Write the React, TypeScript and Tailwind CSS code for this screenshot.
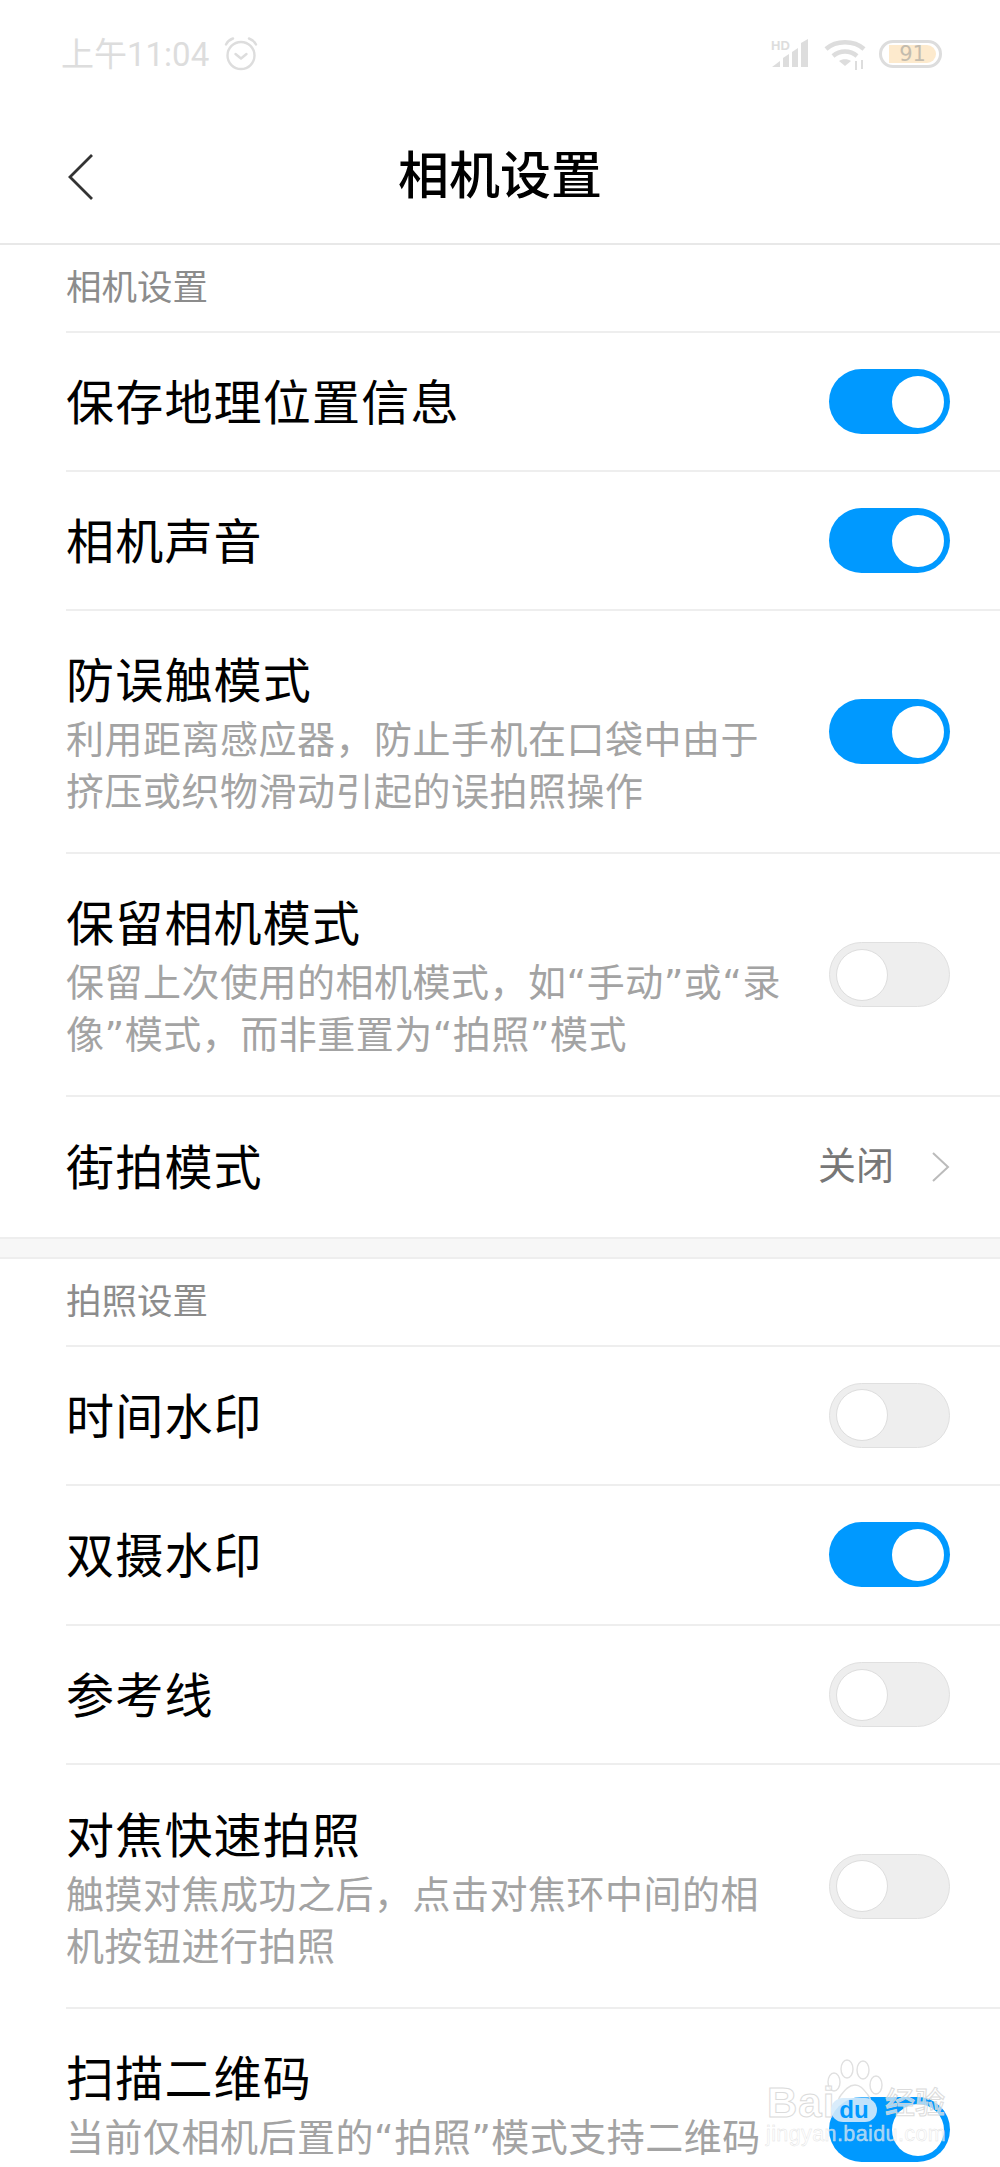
type Item = {
  title: string;
  desc?: string[];
  on?: boolean;
  value?: string;
};

const cameraItems: Item[] = [
  { title: "保存地理位置信息", on: true },
  { title: "相机声音", on: true },
  {
    title: "防误触模式",
    desc: ["利用距离感应器，防止手机在口袋中由于", "挤压或织物滑动引起的误拍照操作"],
    on: true,
  },
  {
    title: "保留相机模式",
    desc: ["保留上次使用的相机模式，如“手动”或“录", "像”模式，而非重置为“拍照”模式"],
    on: false,
  },
  { title: "街拍模式", value: "关闭" },
];

const photoItems: Item[] = [
  { title: "时间水印", on: false },
  { title: "双摄水印", on: true },
  { title: "参考线", on: false },
  {
    title: "对焦快速拍照",
    desc: ["触摸对焦成功之后，点击对焦环中间的相", "机按钮进行拍照"],
    on: false,
  },
  {
    title: "扫描二维码",
    // second line falls below the fold, keep the row height with an empty line
    desc: ["当前仅相机后置的“拍照”模式支持二维码", "\u00a0"],
    on: true,
  },
];

const Toggle = ({ on }: { on?: boolean }) =>
  on ? (
    <div className="flex h-[65px] w-[121px] shrink-0 items-center justify-end rounded-full bg-[#0099ff] pr-[6px]">
      <div className="h-[52px] w-[52px] rounded-full bg-white" />
    </div>
  ) : (
    <div className="flex h-[65px] w-[121px] shrink-0 items-center rounded-full border border-[#e0e0e0] bg-[#eeeeee] pl-[6px]">
      <div className="h-[52px] w-[52px] rounded-full border border-[#dddddd] bg-white" />
    </div>
  );

const Row = ({ item, last, tight }: { item: Item; last?: boolean; tight?: boolean }) => {
  const height = item.desc
    ? tight
      ? "h-[243px]"
      : "h-[243.5px]"
    : tight
      ? "h-[139.2px]"
      : "h-[139.6px]";
  return (
    <div
      className={`ml-[66px] flex items-center justify-between pr-[50px] ${height} ${
        last ? "" : "border-b-2 border-[#eeeeee]"
      }`}
    >
      <div className="pt-[3px]">
        <div className="text-[48px] leading-[66px] tracking-[1.2px] text-black">{item.title}</div>
        {item.desc?.map((line) => (
          <div
            key={line}
            className="whitespace-nowrap text-[38px] leading-[52px] tracking-[0.5px] text-[#a3a3a3]"
          >
            {line}
          </div>
        ))}
      </div>
      {item.value ? (
        <div className="flex items-center">
          <span className="text-[38px] text-[#777777]">{item.value}</span>
          <svg className="ml-[37px] mr-[-1px]" width="20" height="32" viewBox="0 0 20 32" fill="none" stroke="#bbbbbb" strokeWidth="2">
            <path d="M2 2l15 14L2 30" />
          </svg>
        </div>
      ) : (
        <Toggle on={item.on} />
      )}
    </div>
  );
};

const SectionLabel = ({ text }: { text: string }) => (
  <div className="ml-[66px] flex h-[88px] items-center border-b-2 border-[#eeeeee] text-[35.5px] text-[#8c8c8c]">
    {text}
  </div>
);

const StatusBar = () => (
  <div className="flex h-[108px] items-center justify-between pl-[61px] pr-[58px]">
    <div className="flex items-center gap-[15px] font-['Roboto','Noto_Sans_CJK_SC',sans-serif] text-[33px] leading-none text-[#dddddd]">
      <span>上午11:04</span>
      <svg width="34" height="34" viewBox="0 0 34 34" fill="none" stroke="#dddddd" strokeWidth="2.4" strokeLinecap="round" strokeLinejoin="round">
        <circle cx="17" cy="18.5" r="13.5" />
        <path d="M11.5 17l5.500 4.500 5.500-4.500" />
        <path d="M2 7.500C3.500 4.500 6 2.500 9 1.500M32 7.500C30.500 4.500 28 2.500 25 1.500" />
      </svg>
    </div>
    <div className="flex items-center gap-[13px]">
      <svg width="40" height="30" viewBox="0 0 40 30">
        <text x="0" y="11" fontSize="13" fontWeight="700" fill="#dddddd" fontFamily="Liberation Sans">HD</text>
        <path d="M1 28l8-6v6zM12 28v-9l6-4v13zM21 28V13l6-4v19zM30 28V4l7-4v28z" fill="#dddddd" />
      </svg>
      <svg width="42" height="32" viewBox="0 0 42 32" fill="none" stroke="#dddddd" strokeWidth="4.500">
        <path d="M2 11c10-9 28-9 38 0" />
        <path d="M9 18c7-6 17-6 24 0" />
        <path d="M21 28l-6-5c3-2.500 9-2.500 12 0z" fill="#dddddd" stroke="none" />
        <path d="M32 23v9M38 22v9" strokeWidth="2" />
      </svg>
      <div className="flex h-[28px] w-[63px] items-center rounded-full border-[3px] border-[#dddddd] pl-[7px] pr-[3px]">
        <div className="flex h-[18px] w-full items-center justify-center rounded-r-full bg-[#fdeacd] text-[21px] font-medium leading-none text-[#c4bcae]">
          91
        </div>
      </div>
    </div>
  </div>
);

const Watermark = () => (
  <div className="absolute left-[765px] top-[2058px] h-[90px] w-[190px] text-white opacity-90">
    <svg className="absolute left-[60px] top-0" width="60" height="62" viewBox="0 0 60 62" fill="#ffffff" fillOpacity="0.35" stroke="#dddddd" strokeWidth="1.4">
      <ellipse cx="22" cy="11" rx="6" ry="9" />
      <ellipse cx="38" cy="12" rx="6" ry="9" />
      <ellipse cx="9" cy="24" rx="6" ry="9" />
      <ellipse cx="51" cy="27" rx="6" ry="9" />
      <path d="M30 27c6 0 9 5 13 10s4 13-4 14c-4 0-5-1-9-1s-6 2-10 1c-8-1-8-9-4-14s8-10 14-10z" />
    </svg>
    <div className="absolute left-[2px] top-[24px] font-['Liberation_Sans',sans-serif] text-[42px] font-bold leading-none tracking-[1px] text-white/60 [-webkit-text-stroke:1px_#d8d8d8]">
      Bai
    </div>
    <div className="absolute left-[66px] top-[40px] flex h-[24px] w-[46px] items-center justify-center rounded-full bg-[#d5ebfb] font-['Liberation_Sans',sans-serif] text-[24px] font-bold leading-none text-[#0099ff]">
      du
    </div>
    <div className="absolute left-[120px] top-[30px] text-[30px] font-medium leading-none text-white/70 [-webkit-text-stroke:1px_#d8d8d8]">
      经验
    </div>
    <div className="absolute left-[1px] top-[66px] whitespace-nowrap font-['Liberation_Sans',sans-serif] text-[21.500px] leading-none tracking-[0.4px] text-white/70 [-webkit-text-stroke:0.4px_#dddddd]">
      jingyan.baidu.com
    </div>
  </div>
);

export default function App() {
  return (
    <div className="relative h-[2167px] w-[1000px] overflow-hidden bg-white font-['DejaVu_Sans','Noto_Sans_CJK_SC',sans-serif]">
      <StatusBar />
      <div className="grid h-[137px] grid-cols-[1fr_auto_1fr] items-center border-b-2 border-[#e8e8e8] pt-[2px]">
        <svg className="ml-[67px]" width="28" height="48" viewBox="0 0 28 48" fill="none" stroke="#333333" strokeWidth="2.8">
          <path d="M25 2L3 24l22 22" />
        </svg>
        <div className="text-[51px] font-medium leading-none text-black">相机设置</div>
        <div />
      </div>
      <SectionLabel text="相机设置" />
      {cameraItems.map((item, i) => (
        <Row key={item.title} item={item} tight last={i === cameraItems.length - 1} />
      ))}
      <div className="h-[22px] border-y-2 border-[#eeeeee] bg-[#f7f7f7]" />
      <SectionLabel text="拍照设置" />
      {photoItems.map((item) => (
        <Row key={item.title} item={item} />
      ))}
      <Watermark />
    </div>
  );
}
